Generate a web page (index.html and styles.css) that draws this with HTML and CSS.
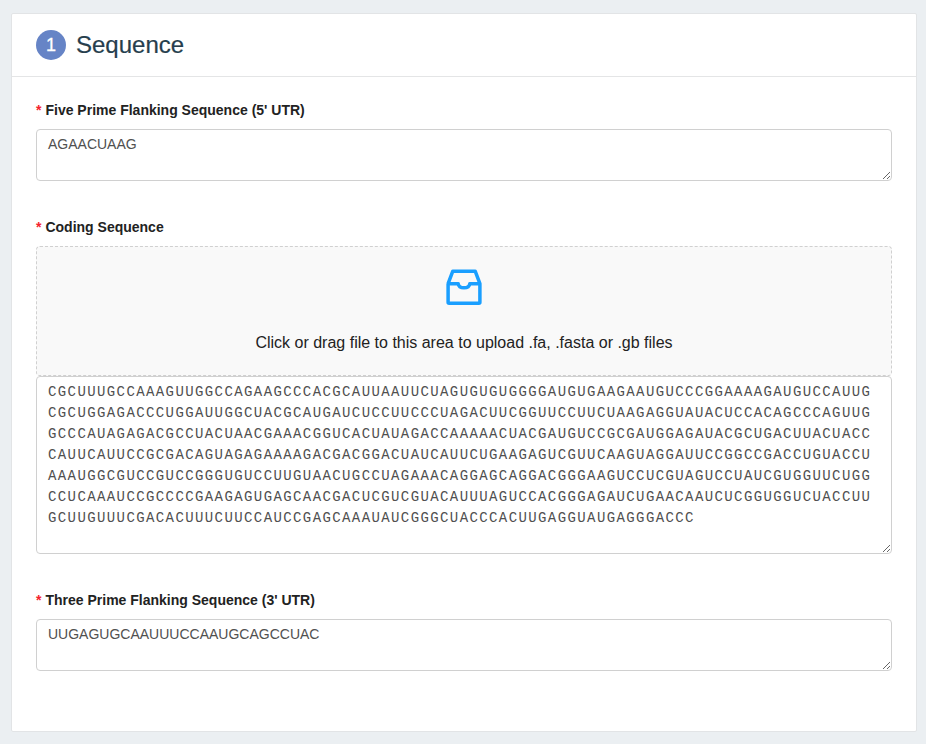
FILE: index.html
```html
<!DOCTYPE html>
<html lang="en">
<head>
<meta charset="utf-8">
<title>Sequence</title>
<link rel="stylesheet" href="styles.css">
</head>
<body>
<main class="card">
  <header class="card-head">
    <span class="step">1</span>
    <h1 class="title">Sequence</h1>
  </header>
  <form class="card-body">
    <div class="field">
      <label class="label" for="five"><span class="required">*</span>Five Prime Flanking Sequence (5' UTR)</label>
      <textarea class="input" id="five" spellcheck="false">AGAACUAAG</textarea>
    </div>
    <div class="field">
      <label class="label" for="coding"><span class="required">*</span>Coding Sequence</label>
      <div class="dragger">
        <svg class="inbox" viewBox="0 0 36 37" fill="none" stroke="#1a9fff" stroke-width="3.5" stroke-linejoin="round">
          <path d="M2.1 14.7 6.8 2.2H29.2L33.9 14.7V33.2Q33.9 34.2 32.9 34.2H3.1Q2.1 34.2 2.1 33.2V14.7H12.2C13 20.2 23 20.2 23.8 14.7H33.9"/>
        </svg>
        <p class="hint">Click or drag file to this area to upload .fa, .fasta or .gb files</p>
      </div>
      <textarea class="input sequence" id="coding" spellcheck="false">CGCUUUGCCAAAGUUGGCCAGAAGCCCACGCAUUAAUUCUAGUGUGUGGGGAUGUGAAGAAUGUCCCGGAAAAGAUGUCCAUUG
CGCUGGAGACCCUGGAUUGGCUACGCAUGAUCUCCUUCCCUAGACUUCGGUUCCUUCUAAGAGGUAUACUCCACAGCCCAGUUG
GCCCAUAGAGACGCCUACUAACGAAACGGUCACUAUAGACCAAAAACUACGAUGUCCGCGAUGGAGAUACGCUGACUUACUACC
CAUUCAUUCCGCGACAGUAGAGAAAAGACGACGGACUAUCAUUCUGAAGAGUCGUUCAAGUAGGAUUCCGGCCGACCUGUACCU
AAAUGGCGUCCGUCCGGGUGUCCUUGUAACUGCCUAGAAACAGGAGCAGGACGGGAAGUCCUCGUAGUCCUAUCGUGGUUCUGG
CCUCAAAUCCGCCCCGAAGAGUGAGCAACGACUCGUCGUACAUUUAGUCCACGGGAGAUCUGAACAAUCUCGGUGGUCUACCUU
GCUUGUUUCGACACUUUCUUCCAUCCGAGCAAAUAUCGGGCUACCCACUUGAGGUAUGAGGGACCC</textarea>
    </div>
    <div class="field">
      <label class="label" for="three"><span class="required">*</span>Three Prime Flanking Sequence (3' UTR)</label>
      <textarea class="input" id="three" spellcheck="false">UUGAGUGCAAUUUCCAAUGCAGCCUAC</textarea>
    </div>
  </form>
</main>
</body>
</html>
```
FILE: styles.css
```css
* { box-sizing: border-box; }
body {
  margin: 0;
  padding: 13px 9px 0 11px;
  height: 744px;
  overflow: hidden;
  background: #ebeff2;
  font-family: "Liberation Sans", Arial, sans-serif;
  font-size: 14px;
  color: #222;
}
.card {
  height: 719px;
  background: #fff;
  border: 1px solid #e2e4e6;
  border-radius: 2px;
}
.card-head {
  display: flex;
  align-items: center;
  gap: 10px;
  height: 63px;
  padding: 0 24px;
  border-bottom: 1px solid #e4e5e6;
}
.step {
  width: 30px;
  height: 30px;
  border-radius: 50%;
  background: #6684c6;
  color: #fff;
  font-size: 18px;
  line-height: 31px;
  text-align: center;
  -webkit-text-stroke: .3px #fff;
}
.title {
  margin: 0;
  font-size: 24px;
  font-weight: 400;
  line-height: 30px;
  color: #263e4d;
  -webkit-text-stroke: .2px #263e4d;
}
.card-body { padding: 22px 24px 0; }
.field { margin-bottom: 35px; }
.label {
  display: block;
  height: 30px;
  line-height: 22px;
  font-weight: 700;
}
.required {
  margin-right: 4px;
  color: #f5222d;
}
.input {
  display: block;
  width: 100%;
  height: 52px;
  margin: 0;
  padding: 4px 11px;
  border: 1px solid #d0d0d0;
  border-radius: 4px;
  background: #fff;
  color: #505050;
  font: 14px/21px "Liberation Sans", Arial, sans-serif;
  outline: none;
  resize: vertical;
  overflow: auto;
}
.dragger {
  display: flex;
  flex-direction: column;
  align-items: center;
  height: 130px;
  padding-top: 22px;
  border: 1px dashed #d0d0d0;
  border-radius: 4px;
  background: #f9f9f9;
}
.inbox { display: block; width: 36px; height: 37px; }
.hint {
  margin: 25px 0 0;
  font-size: 16px;
  line-height: 24px;
}
.input.sequence {
  height: 178px;
  padding-top: 5px;
  font-family: "Liberation Mono", "Courier New", monospace;
  letter-spacing: 1.4px;
  white-space: pre;
}
```
